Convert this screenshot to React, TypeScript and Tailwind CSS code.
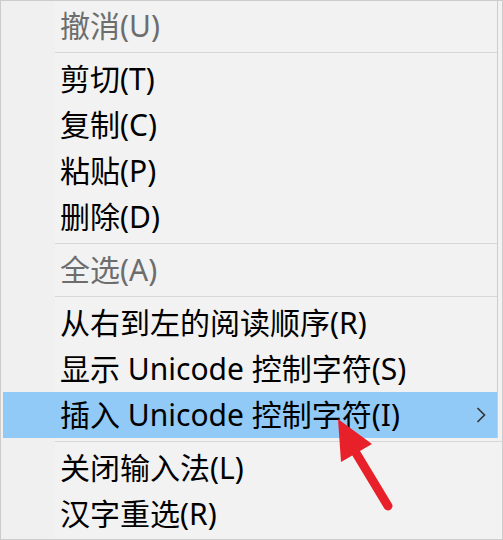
import React from "react";

type Item = { label: string; disabled?: boolean; active?: boolean; sub?: boolean } | "sep";

const upper: Item[] = [
  { label: "撤消(U)", disabled: true },
  "sep",
  { label: "剪切(T)" },
  { label: "复制(C)" },
  { label: "粘贴(P)" },
  { label: "删除(D)" },
  "sep",
  { label: "全选(A)", disabled: true },
  "sep",
  { label: "从右到左的阅读顺序(R)" },
  { label: "显示 Unicode 控制字符(S)" },
  { label: "插入 Unicode 控制字符(I)", active: true, sub: true },
];

const lower: Item[] = [{ label: "关闭输入法(L)" }, { label: "汉字重选(R)" }];

function Sep() {
  return (
    <div className="h-[7px] flex items-center pl-[52px]">
      <div className="h-px w-full bg-[#d7d7d7]" />
    </div>
  );
}

function Row({ item }: { item: Exclude<Item, "sep"> }) {
  return (
    <div
      className={`h-[46px] flex items-center pl-[57px] pr-[10px] ${
        item.active ? "bg-[#91c9f7]" : ""
      }`}
    >
      <span
        className={`flex-1 text-[30px] leading-none whitespace-pre ${
          item.disabled ? "text-[#6d6d6d]" : "text-black"
        }`}
      >
        {item.label}
      </span>
      {item.sub && (
        <svg width="10" height="16" viewBox="0 0 10 16" className="mr-[1px]">
          <path d="M1.5 1 L8.5 8 L1.5 15" fill="none" stroke="#333" strokeWidth="1.6" />
        </svg>
      )}
    </div>
  );
}

function renderItems(items: Item[]) {
  return items.map((it, i) => (it === "sep" ? <Sep key={i} /> : <Row key={i} item={it} />));
}

export default function App() {
  return (
    <div
      className="relative w-[503px] h-[540px] border border-[#cccccc] bg-[#f2f2f2] flex flex-col overflow-hidden"
      style={{ fontFamily: '"Noto Sans", "Noto Sans CJK SC", sans-serif' }}
    >
      <div className="w-[497px] border-r border-[#cccccc] pt-[2px] pl-[2px] bg-[linear-gradient(to_right,#f0f0f0_54px,#f2f2f2_54px)]">
        {renderItems(upper)}
      </div>
      <div className="flex-1 pl-[2px] bg-[linear-gradient(to_right,#f0f0f0_54px,#f2f2f2_54px)]">
        <div className="h-[7px] flex items-center pl-[52px]">
          <div className="h-px w-full bg-[#d7d7d7]" />
        </div>
        {renderItems(lower)}
      </div>
      <svg
        className="absolute left-0 top-0 pointer-events-none"
        width="503"
        height="540"
        viewBox="0 0 503 540"
      >
        <line x1="387" y1="505" x2="352" y2="447" stroke="#e8202a" strokeWidth="9" strokeLinecap="round" />
        <polygon points="337,418 340,461 371,443" fill="#e8202a" />
      </svg>
    </div>
  );
}
